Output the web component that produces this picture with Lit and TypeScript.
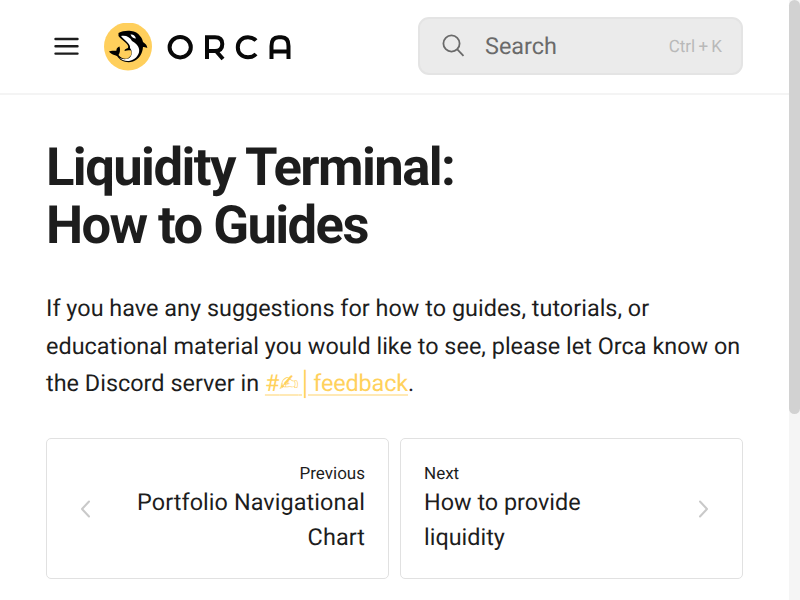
import { LitElement, html, css } from "lit";
import { customElement } from "lit/decorators.js";

@customElement("app-root")
export class AppRoot extends LitElement {
  static styles = css`
    :host { display: flex; width: 800px; height: 600px; overflow: hidden; background: #fff; font-family: Roboto, sans-serif; color: #1d1d1d; text-rendering: geometricPrecision; }
    * { box-sizing: border-box; }
    .page { width: 789px; flex: none; }
    .track { width: 11px; background: #f5f5f5; }
    .thumb { height: 414px; border-radius: 6px; background: #d2d2d2; }
    header { height: 95px; border-bottom: 2px solid #f4f4f4; padding: 17px 46px 0 54px; display: flex; }
    svg { display: block; flex: none; }
    .menu { margin-top: 20px; width: 25px; height: 19px; }
    .mark { margin: 6px 0 0 25px; width: 48px; height: 48px; }
    .word { margin: 17px 0 0 14px; width: 126px; height: 28px; }
    .search { margin-left: auto; width: 325px; height: 58px; border: 2px solid #e4e4e4; border-radius: 11px; background: #ebebeb; display: flex; align-items: center; padding: 0 19px 0 22px; color: #6a6a6a; font-size: 23.4px; }
    .search svg { width: 24px; height: 24px; margin-right: 19px; }
    .key { margin-left: auto; padding-top: 1px; font-size: 17px; color: #b9b9b9; word-spacing: -1px; }
    main { padding: 43px 46px 0; }
    h1 { margin: 0; font-size: 52.6px; line-height: 58px; font-weight: 700; letter-spacing: -1.6px; }
    p { margin: 36px 0 0; font-size: 23.4px; letter-spacing: 0.02px; line-height: 37.5px; white-space: nowrap; }
    a { color: #ffd15c; letter-spacing: -0.12px; text-decoration: underline 2px #ffe9b5; text-underline-offset: 3px; }
    .hand { font-family: "DejaVu Sans", sans-serif; }
    .cards { display: grid; grid-template-columns: 343px 343px; gap: 11px; margin-top: 35.5px; }
    .card { height: 141px; border: 1px solid #e1e1e1; border-radius: 5px; display: flex; align-items: center; justify-content: space-between; padding: 0 23px; }
    .chevron { width: 12px; height: 18px; margin: 0 10px; fill: none; stroke: #c9c9c9; stroke-width: 2; stroke-linejoin: round; stroke-linecap: round; }
    .small { font-size: 17px; line-height: 22px; }
    .title { font-size: 23.4px; line-height: 35px; }
    .right { text-align: right; }
    .right .title { letter-spacing: 0.08px; }
  `;
  render() {
    return html`<div class="page"><header>
      <svg class="menu" viewBox="0 0 25 19" stroke="#1d1d1d" stroke-width="2.4" stroke-linecap="round"><path d="M1.5 2H23.5M1.5 9.3H23.5M1.5 16.6H23.5"/></svg>
      <svg class="mark" viewBox="0 0 48 48"><circle cx="24" cy="23.5" r="24" fill="#ffcf5c"/>
        <path d="M14.5 10C18 8 23 7.5 27 8C31 8.5 34 10 36 13C38 15 38.5 17 39 19C42 21 43 22.5 43.3 25C41.5 24 40 24 39 24C38.5 31 35 36 29 38.5C23 40.5 16 38 13 33C11 32 7 31.5 5 28.5C8 27 11 28.5 12.5 27.5C12 25.5 14 24 15.5 23.5C16.5 27 16 30 14.5 32C17 35.5 22 37 25 34.5C28 32 28 29.5 27 27.5C25.5 27 23 27 20.5 28C20.5 26 22.5 25.5 24 25C26 21 17 17 14.5 13Z"/>
        <path d="M17 13C22 12 26 14 28 18C31 20 35 22.5 35.2 27C35.5 33 30 37 25 38C21 38.5 17 36.5 15 34.5C18 36.5 22.5 37 25.5 34.8C28.5 32 28.5 28 26 25C27 21 20 17 17 13ZM26.5 11.5C29 11 31 12.5 32 15.5C29.5 15.5 27.5 14 26.5 11.5Z" fill="#fff"/></svg>
      <svg class="word" viewBox="0 0 126 28" fill="none" stroke="#080808" stroke-width="4"><ellipse cx="14.2" cy="13.2" rx="10.6" ry="10.2"/><path d="M41 25V3.3H49Q56.3 3.3 56.3 10Q56.3 17 49 17H41M50 17L57 25M90 6.5Q87 3.2 82 3.2C75.8 3.2 71.8 7.5 71.8 13.2C71.8 19 75.8 23.3 82 23.3Q87 23.3 90 20M105.5 25V12Q105.5 3.3 112.5 3.3H115.5Q122.5 3.3 122.5 12V25M105.5 17.5H122.5"/></svg>
      <div class="search"><svg viewBox="0 0 24 24" fill="none" stroke="#6a6a6a" stroke-width="1.8"><circle cx="9.5" cy="9.5" r="8.1"/><path d="M15.3 15.3L21.5 21.8"/></svg>Search<span class="key">Ctrl + K</span></div>
    </header><main><h1>Liquidity Terminal:<br />How to Guides</h1>
    <p>If you have any suggestions for how to guides, tutorials, or<br />educational material you would like to see, please let Orca know on<br />the Discord server in <a>#<span class="hand">✍&#xFE0E;</span>│feedback</a>.</p>
    <div class="cards"><div class="card"><svg class="chevron" viewBox="0 0 12 18"><path d="M9 1.5L2 9L9 16.5"/></svg><div class="right"><div class="small">Previous</div><div class="title">Portfolio Navigational<br />Chart</div></div></div><div class="card"><div><div class="small">Next</div><div class="title">How to provide<br />liquidity</div></div><svg class="chevron" viewBox="0 0 12 18"><path d="M3 1.5L10 9L3 16.5"/></svg></div></div></main></div><div class="track"><div class="thumb"></div></div>`;
  }
}
